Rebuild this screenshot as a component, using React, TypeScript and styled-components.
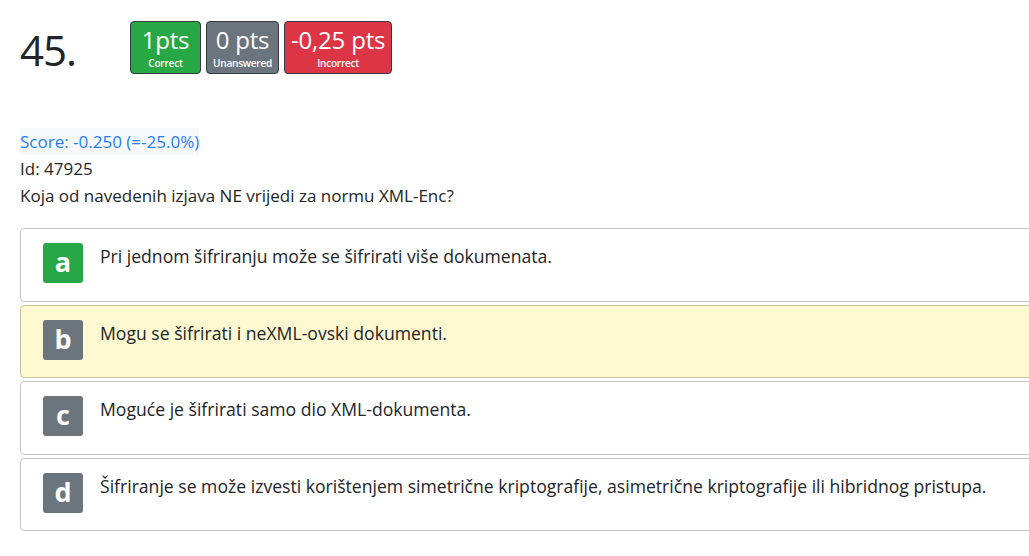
import React from "react";
import styled, { createGlobalStyle } from "styled-components";

const Global = createGlobalStyle`
  html, body { margin: 0; padding: 0; overflow: hidden; background: #fff; }
  body { font-family: "Open Sans", "Liberation Sans", sans-serif; color: #212529; }
`;

const Page = styled.div`
  padding: 21px 0 0 20px;
  width: 1040px;
`;

const Header = styled.div`
  display: flex;
  align-items: flex-start;
`;

const Number = styled.div`
  width: 110px;
  font-size: 42px;
  line-height: 1;
  padding-top: 8px;
  font-weight: 400;
  letter-spacing: -1px;
`;

const Badges = styled.div`
  display: flex;
  gap: 5px;
`;

const PtsBadge = styled.div<{ $bg: string }>`
  background: ${(p) => p.$bg};
  color: #fff;
  border: 1px solid #343a40;
  border-radius: 4px;
  height: 51px;
  padding: 0 6px;
  min-width: 57px;
  display: flex;
  flex-direction: column;
  align-items: center;
  justify-content: flex-start;
`;

const PtsValue = styled.div`
  font-size: 24px;
  line-height: 1;
  margin-top: 6px;
  letter-spacing: -0.2px;
`;

const PtsLabel = styled.div`
  font-size: 10px;
  font-weight: 600;
  line-height: 1;
  margin-top: 6px;
  letter-spacing: -0.2px;
`;

const Meta = styled.div`
  margin-top: 54px;
  font-size: 17px;
  line-height: 27px;
`;

const Score = styled.div`
  display: inline-block;
  background: #f7f8fa;
  color: #1f7ff4;
`;

const Line = styled.div``;

const Answers = styled.div`
  margin-top: 19px;
  display: flex;
  flex-direction: column;
  gap: 3px;
`;

const Card = styled.div<{ $marked?: boolean }>`
  display: flex;
  align-items: flex-start;
  gap: 17px;
  border: 1px solid ${(p) => (p.$marked ? "#c9c29c" : "#c4c4c4")};
  background: ${(p) => (p.$marked ? "#fff9d2" : "#fff")};
  border-radius: 4px;
  padding: 14px 22px 17.5px 22px;
  min-height: 40px;
`;

const Letter = styled.div<{ $bg: string }>`
  flex: none;
  width: 40px;
  height: 40px;
  border-radius: 3px;
  background: ${(p) => p.$bg};
  color: #fff;
  font-size: 27px;
  font-weight: 700;
  display: flex;
  align-items: center;
  justify-content: center;
  line-height: 1;
  padding-bottom: 3px;
  box-sizing: border-box;
`;

const AnswerText = styled.div`
  font-size: 17.6px;
  line-height: 26px;
`;

const answers = [
  { l: "a", t: "Pri jednom šifriranju može se šifrirati više dokumenata.", c: "#28a745" },
  { l: "b", t: "Mogu se šifrirati i neXML-ovski dokumenti.", c: "#6c757d", m: true },
  { l: "c", t: "Moguće je šifrirati samo dio XML-dokumenta.", c: "#6c757d" },
  {
    l: "d",
    t: "Šifriranje se može izvesti korištenjem simetrične kriptografije, asimetrične kriptografije ili hibridnog pristupa.",
    c: "#6c757d",
  },
];

export default function App() {
  return (
    <>
      <Global />
      <Page>
        <Header>
          <Number>45.</Number>
          <Badges>
            <PtsBadge $bg="#28a745">
              <PtsValue>1pts</PtsValue>
              <PtsLabel>Correct</PtsLabel>
            </PtsBadge>
            <PtsBadge $bg="#6c757d">
              <PtsValue>0 pts</PtsValue>
              <PtsLabel>Unanswered</PtsLabel>
            </PtsBadge>
            <PtsBadge $bg="#dc3545">
              <PtsValue>-0,25 pts</PtsValue>
              <PtsLabel>Incorrect</PtsLabel>
            </PtsBadge>
          </Badges>
        </Header>
        <Meta>
          <Score>Score: -0.250 (=-25.0%)</Score>
          <Line>Id: 47925</Line>
          <Line>Koja od navedenih izjava NE vrijedi za normu XML-Enc?</Line>
        </Meta>
        <Answers>
          {answers.map((a) => (
            <Card key={a.l} $marked={a.m}>
              <Letter $bg={a.c}>{a.l}</Letter>
              <AnswerText>{a.t}</AnswerText>
            </Card>
          ))}
        </Answers>
      </Page>
    </>
  );
}
